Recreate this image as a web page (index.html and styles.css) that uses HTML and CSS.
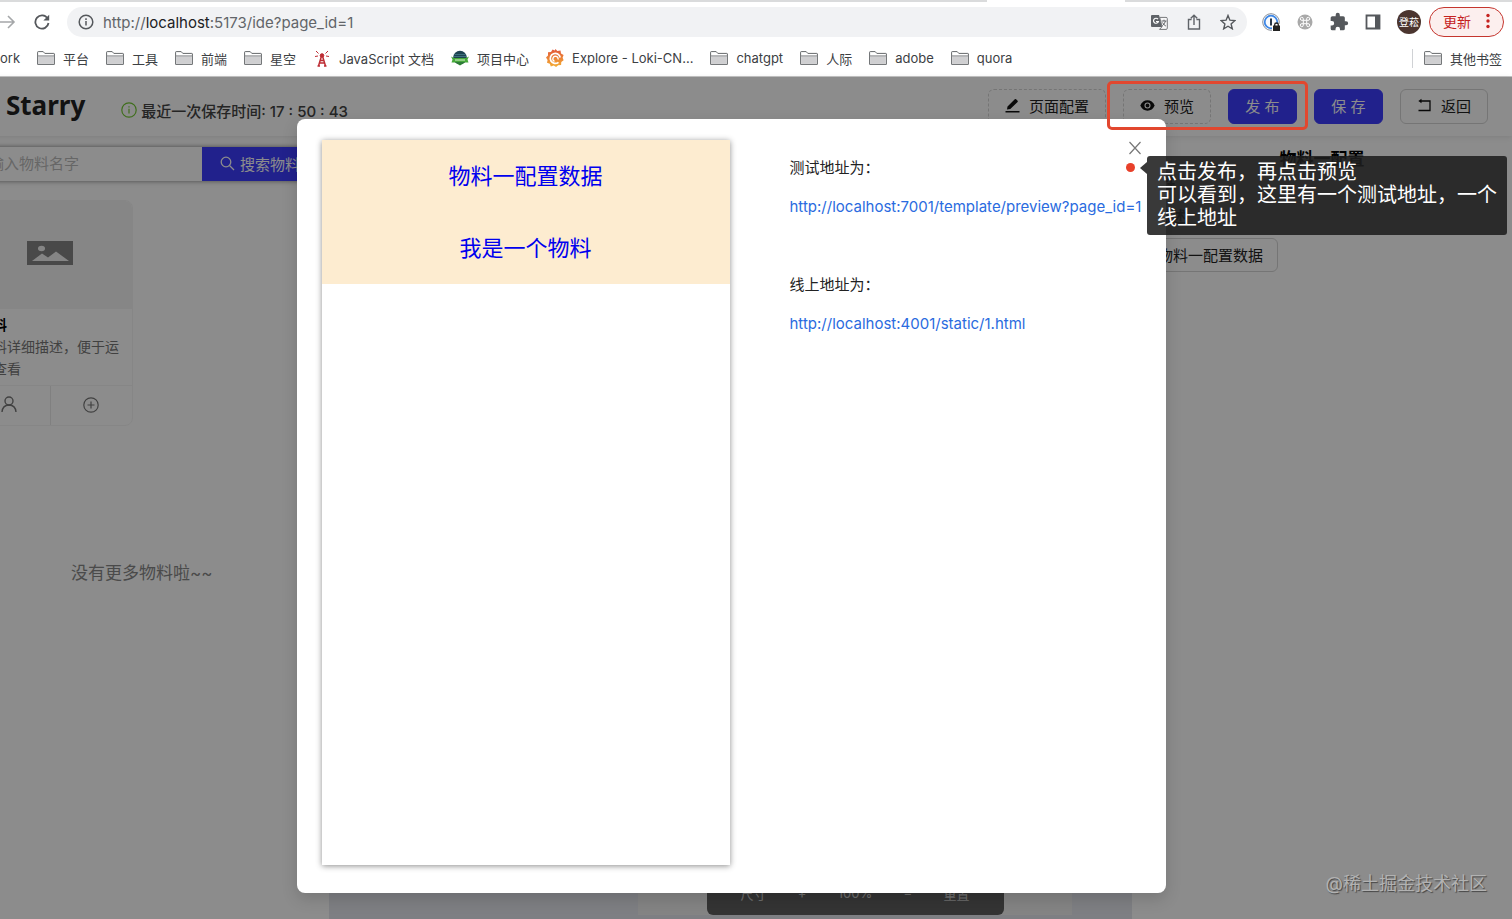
FILE: index.html
```
<!DOCTYPE html>
<html lang="zh-CN">
<head>
    <meta charset="UTF-8">
    <meta name="viewport" content="width=device-width, initial-scale=1.0">
    <link rel="stylesheet" href="styles.css">
    <title>Starry</title>
</head>
<body>
    <svg class="symbols" width="0" height="0" aria-hidden="true">
        <symbol id="folder" viewBox="0 0 18 14">
            <path d="M.6 13.4V1.2Q.6.6 1.2.6h5l1.6 1.8h9q.6 0 .6.6v10.4z" fill="#fff" stroke="#65686b"/>
            <path d="M1.1 5.2h15.8v7.7H1.1z" fill="#cfcfd1"/>
            <path d="M.6 4.9h16.8" stroke="#85878a"/>
        </symbol>
    </svg>

    <div class="browser">
        <div class="tab-strip"><div class="open-tab"></div></div>
        <div class="toolbar">
            <button class="icon-btn forward" aria-label="Forward">
                <svg width="16" height="16" viewBox="0 0 16 16" fill="none" stroke="#a5a7a9" stroke-width="1.6"><path d="M0 8h14M8 2l6 6-6 6"/></svg>
            </button>
            <button class="icon-btn reload" aria-label="Reload">
                <svg width="16" height="16" viewBox="0 0 16 16" fill="none" stroke="#55585c" stroke-width="1.8"><path d="M13.6 4.6A6.6 6.6 0 1 0 14.5 9"/><path d="M15.2.8v5.8H9.4z" fill="#55585c" stroke="none"/></svg>
            </button>
            <div class="omnibox">
                <svg width="16" height="16" viewBox="0 0 16 16" fill="none" stroke="#55585c" stroke-width="1.5"><circle cx="8" cy="8" r="6.8"/><path d="M8 7v4.6M8 4.2v1.7"/></svg>
                <div class="url">http://<span>localhost</span>:5173/ide?page_id=1</div>
                <button class="icon-btn" aria-label="Translate">
                    <svg width="17" height="16" viewBox="0 0 17 16"><path d="M1 1h7l3.5 12H1Q0 13 0 12V2Q0 1 1 1z" fill="#5f6368"/><path d="M8.7 3.4H15q1.3 0 1.3 1.2v9.6q0 1.2-1.3 1.2H8.5l2.6-2.7z" fill="#f7f7f8" stroke="#77797c"/><path d="M7 5.2A2.5 2.5 0 1 0 7.4 7.500H5" fill="none" stroke="#fff" stroke-width="1.2"/><path d="M10.500 7h5M13 5.700V7M14.500 7q-.8 3-3.200 4.700M11.500 8.500q1.200 2.400 3.400 3.600" fill="none" stroke="#66696c"/></svg>
                </button>
                <button class="icon-btn" aria-label="Share">
                    <svg width="14" height="16" viewBox="0 0 14 16" fill="none" stroke="#5f6368" stroke-width="1.4"><path d="M4.600 5.500H1.500V15h11V5.500H9.400M7 11V1.500M3.800 4.300 7 1.200l3.200 3.100"/></svg>
                </button>
                <button class="icon-btn" aria-label="Bookmark">
                    <svg width="16" height="16" viewBox="0 0 16 16" fill="none" stroke="#55585c" stroke-width="1.400"><path d="m8 1.500 1.900 4.700 5 .4-3.800 3.300 1.200 4.900L8 12.200l-4.300 2.600 1.200-4.900L1.100 6.600l5-.4z"/></svg>
                </button>
            </div>
            <div class="extensions">
                <button class="icon-btn" aria-label="Password manager">
                    <svg width="20" height="20" viewBox="0 0 20 20"><circle cx="10" cy="10" r="8.300" fill="#fff" stroke="#8a9099"/><circle cx="10" cy="10" r="6.300" fill="#f8fbff" stroke="#3d87e6" stroke-width="1.800"/><path d="M10 6.500v7" stroke="#26364a" stroke-width="2"/><path d="M11 12h8v7h-8z" fill="#fff"/><path d="M12 13.500h7V19h-7z" fill="#222"/><path d="M13.700 14v-1.200a1.800 1.800 0 0 1 3.600 0V14" fill="none" stroke="#222" stroke-width="1.300"/></svg>
                </button>
                <button class="icon-btn" aria-label="Shortcuts">
                    <svg width="20" height="20" viewBox="0 0 20 20"><circle cx="10" cy="10" r="7.500" fill="#a9a9a9"/><path d="M8.300 8.300h3.400v3.400H8.300zM8.300 8.300H7a1.500 1.500 0 1 1 1.300-1.500zM11.700 8.300H13a1.500 1.500 0 1 0-1.300-1.500zM8.300 11.700H7a1.500 1.500 0 1 0 1.300 1.500zM11.700 11.700H13a1.500 1.500 0 1 1-1.300 1.500z" fill="none" stroke="#fff"/></svg>
                </button>
                <button class="icon-btn" aria-label="Extensions">
                    <svg width="20" height="20" viewBox="0 0 24 24" fill="#55585c"><path d="M20.500 11H19V7a2 2 0 0 0-2-2h-4V3.500a2.500 2.500 0 0 0-5 0V5H4a2 2 0 0 0-2 2v3.800h1.500a2.700 2.700 0 0 1 0 5.400H2V20a2 2 0 0 0 2 2h3.800v-1.500a2.700 2.700 0 0 1 5.400 0V22H17a2 2 0 0 0 2-2v-4h1.500a2.500 2.500 0 0 0 0-5z"/></svg>
                </button>
                <button class="icon-btn" aria-label="Side panel">
                    <svg width="20" height="20" viewBox="0 0 20 20"><path d="M3.500 3.500h13v13h-13z" fill="#fff" stroke="#55585c" stroke-width="1.800"/><path d="M12 3h5v14h-5z" fill="#55585c"/></svg>
                </button>
                <div class="avatar">登菘</div>
            </div>
            <button class="update">更新
                <svg width="4" height="16" viewBox="0 0 4 16" fill="#c5221f"><circle cx="2" cy="2.500" r="1.700"/><circle cx="2" cy="8" r="1.700"/><circle cx="2" cy="13.500" r="1.700"/></svg>
            </button>
        </div>
        <nav class="bookmarks">
            <a href="#">ork</a>
            <a href="#"><svg class="folder"><use href="#folder"/></svg>平台</a>
            <a href="#"><svg class="folder"><use href="#folder"/></svg>工具</a>
            <a href="#"><svg class="folder"><use href="#folder"/></svg>前端</a>
            <a href="#"><svg class="folder"><use href="#folder"/></svg>星空</a>
            <a href="#">
                <svg width="18" height="18" viewBox="0 0 18 18" fill="none" stroke="#bd2c33"><circle cx="9" cy="6.500" r="1.800" fill="#bd2c33"/><path d="M8.200 8 5.500 17M9.800 8l2.700 9M7 11.500h4M6.500 14h5M4.500 17h2.500M11 17h2.500" stroke-width="1.500"/><path d="M5.500 4.500 3 2M12.500 4.500 15 2M5 7l-3 .5M13 7l3 .5"/></svg>JavaScript 文档</a>
            <a href="#">
                <svg width="18" height="18" viewBox="0 0 18 18"><circle cx="9" cy="8.500" r="6.800" fill="#1d4250"/><path d="M3.500 5.500h11M2.800 7.500h12.400" stroke="#3c6f7c"/><path d="M0 7.500l3 1.500h12l3-1.500-1.500 3 1 3h-17l1-3z" fill="#46a83a"/><path d="M4 11h10" stroke="#d8f0cd"/><path d="M4 13.500h10L9 16.500z" fill="#2d7e34"/></svg>项目中心</a>
            <a href="#">
                <svg width="18" height="18" viewBox="0 0 18 18"><defs><linearGradient id="loki" x2="0" y2="1"><stop stop-color="#e2573a"/><stop offset="1" stop-color="#f4ae33"/></linearGradient></defs><path d="m9.500 0 1.800 2 3.200-.5.5 3 2.600 1.500-1 2.800 1 2.500-2.300 1.700-.2 3-3 .2-2 1.800-2.400-1.400-2.900.8-1-2.700-2.800-1 .6-2.800L0 8.500l2-2L2 3.300l3-.3L6.600.6l2.100.8z" fill="url(#loki)"/><path d="M14.200 8.500a5 5 0 1 0-1.700 4.800" fill="none" stroke="#fff" stroke-width="1.700"/><path d="M12 10.500a2.600 2.600 0 1 0-3.500 1.800" fill="none" stroke="#fff" stroke-width="1.300"/></svg>Explore - Loki-CN...</a>
            <a href="#"><svg class="folder"><use href="#folder"/></svg>chatgpt</a>
            <a href="#"><svg class="folder"><use href="#folder"/></svg>人际</a>
            <a href="#"><svg class="folder"><use href="#folder"/></svg>adobe</a>
            <a href="#"><svg class="folder"><use href="#folder"/></svg>quora</a>
            <a href="#" class="other"><svg class="folder"><use href="#folder"/></svg>其他书签</a>
        </nav>
    </div>

    <div class="app">
        <header class="header">
            <div class="logo">Starry</div>
            <div class="save-time">
                <svg width="16" height="16" viewBox="0 0 16 16" fill="none" stroke="#73c934" stroke-width="1.200"><circle cx="8" cy="8" r="7.200"/><path d="M8 6.800v4.700M8 4.200v1.400"/></svg>
                最近一次保存时间: 17 : 50 : 43
            </div>
            <div class="actions">
                <button class="btn dashed">
                    <svg width="15" height="15" viewBox="0 0 15 15" fill="#111"><path d="M.5 13h14v1.400H.5zM2 11.500l.5-3L9.800 1.200q.7-.5 1.300 0l1.500 1.500q.5.600 0 1.300L5.300 11z"/></svg>页面配置</button>
                <button class="btn dashed">
                    <svg width="15" height="15" viewBox="0 0 15 15"><path d="M.3 7.500Q2.700 2.300 7.500 2.300t7.200 5.200q-2.400 5.200-7.200 5.200T.3 7.500z" fill="#111"/><circle cx="7.500" cy="7.500" r="2.500" fill="none" stroke="#fff" stroke-width="1.100"/></svg>预览</button>
                <button class="btn primary">发 布</button>
                <button class="btn primary">保 存</button>
                <button class="btn">
                    <svg width="15" height="15" viewBox="0 0 15 15" fill="none" stroke="#111" stroke-width="1.300"><path d="M3 3h10v9.500H1.500"/><path d="M4.500.8v4.400L1.300 3z" fill="#111" stroke="none"/></svg>返回</button>
            </div>
        </header>

        <main class="workspace">
            <aside class="materials">
                <div class="search">
                    <input type="text" placeholder="请输入物料名字" aria-label="物料名字">
                    <button class="search-btn">
                        <svg width="15" height="15" viewBox="0 0 15 15" fill="none" stroke="#fff" stroke-width="1.300"><circle cx="6" cy="6" r="4.800"/><path d="m9.500 9.500 4.500 4.500"/></svg>搜索物料</button>
                </div>
                <div class="card">
                    <div class="cover">
                        <svg width="46" height="24" viewBox="0 0 46 24"><path d="M0 0h46v24H0z" fill="#858585"/><ellipse cx="14.500" cy="7.500" rx="3.500" ry="2.700" fill="#f2f2f2"/><path d="M5 20l10-7.500 6 4L29 10.500 42 20z" fill="#f2f2f2"/></svg>
                    </div>
                    <div class="card-body">
                        <h4>物料</h4>
                        <p>物料详细描述，便于运营查看</p>
                    </div>
                    <div class="card-actions">
                        <button class="icon-btn" aria-label="用户"><svg width="18" height="18" viewBox="0 0 18 18" fill="none" stroke="#777" stroke-width="1.400"><circle cx="9" cy="5" r="4"/><path d="M2 16q.5-6.800 7-7 6.500.2 7 7"/></svg></button>
                        <button class="icon-btn" aria-label="添加"><svg width="16" height="16" viewBox="0 0 16 16" fill="none" stroke="#777" stroke-width="1.200"><circle cx="8" cy="8" r="7.200"/><path d="M8 4.500v7M4.500 8h7"/></svg></button>
                    </div>
                </div>
                <p class="no-more">没有更多物料啦~~</p>
            </aside>

            <section class="canvas">
                <div class="page">
                    <div class="zoom-bar">
                        <span>尺寸</span>
                        <button aria-label="放大">+</button>
                        <span>100%</span>
                        <button aria-label="缩小">−</button>
                        <button>重置</button>
                    </div>
                </div>
            </section>

            <aside class="config">
                <h3>物料一配置</h3>
                <p class="group">属性</p>
                <label for="desc">描述</label>
                <input id="desc" type="text" value="物料一配置数据">
            </aside>
        </main>

        <div class="mask">
            <div class="modal" role="dialog" aria-label="预览">
                <div class="phone">
                    <div class="material">物料一配置数据</div>
                    <div class="material">我是一个物料</div>
                </div>
                <div class="address">
                    <p>测试地址为：</p>
                    <a href="#">http://localhost:7001/template/preview?page_id=1</a>
                    <p class="online">线上地址为：</p>
                    <a href="#">http://localhost:4001/static/1.html</a>
                </div>
                <button class="close" aria-label="关闭">
                    <svg width="12" height="14" viewBox="0 0 12 14" stroke="#777" stroke-width="1.200"><path d="M.5 1 11.500 13M11.500 1 .5 13"/></svg>
                </button>
            </div>
        </div>
    </div>

    <div class="highlight"></div>
    <div class="dot"></div>
    <div class="note">点击发布，再点击预览<br>可以看到，这里有一个测试地址，一个线上地址</div>
    <div class="watermark">@稀土掘金技术社区</div>
</body>
</html>
```
FILE: styles.css
```
* {
    box-sizing: border-box;
}

body {
    margin: 0;
    height: 100vh;
    display: flex;
    flex-direction: column;
    position: relative;
    overflow: hidden;
    font-family: Inter, "Noto Sans CJK SC", sans-serif;
    font-size: 15px;
    color: #222;
}

button, input {
    font: inherit;
    color: inherit;
}

button {
    display: flex;
    align-items: center;
    justify-content: center;
    border: none;
    padding: 0;
    background: none;
    cursor: pointer;
    white-space: nowrap;
}

p, h3, h4 {
    margin: 0;
}

a {
    text-decoration: none;
}

svg {
    flex: none;
}

.symbols {
    position: absolute;
}

/* browser chrome */
.browser {
    flex: none;
    background: #fff;
    border-bottom: 1px solid #c4c4c4;
}

.tab-strip {
    height: 2px;
    background: #dadbdc;
    display: flex;
    justify-content: flex-end;
    padding-right: 387px;
}

.open-tab {
    width: 138px;
    background: #fff;
}

.toolbar {
    display: flex;
    align-items: center;
    height: 40px;
    padding-right: 8px;
}

.reload {
    margin: 0 17px 0 18px;
}

.omnibox {
    flex: 1;
    height: 30px;
    border-radius: 15px;
    background: #f1f2f4;
    display: flex;
    align-items: center;
    padding: 0 11px;
    gap: 19px;
}

.url {
    flex: 1;
    margin-left: -10px;
    color: #626569;
}

.url span {
    color: #202124;
}

.extensions {
    display: flex;
    align-items: center;
    gap: 15px;
    padding: 0 8px 0 14px;
}

.extensions .icon-btn {
    margin-right: -1px;
}

.avatar {
    width: 24px;
    height: 24px;
    border-radius: 50%;
    background: #4b352f;
    color: #fff;
    font-size: 10px;
    line-height: 24px;
    text-align: center;
}

.update {
    width: 75px;
    height: 30px;
    gap: 15px;
    padding-bottom: 2px;
    border: 1px solid #c5362f;
    border-radius: 15px;
    background: #fcefee;
    color: #c5221f;
    font-size: 14px;
}

.bookmarks {
    display: flex;
    align-items: center;
    gap: 17px;
    height: 34px;
    padding: 0 10px 2px 0;
    font-size: 13px;
}

.bookmarks a {
    display: flex;
    align-items: center;
    gap: 8px;
    color: #3c4043;
    white-space: nowrap;
}

.folder {
    width: 18px;
    height: 14px;
}

.bookmarks .other {
    margin-left: auto;
    padding-left: 11px;
    border-left: 1px solid #d0d2d5;
}

/* editor, scrolled 50px to the right */
.app {
    flex: 1;
    min-height: 0;
    margin-left: -50px;
    display: flex;
    flex-direction: column;
    position: relative;
    background: #fff;
}

.header {
    flex: none;
    height: 59px;
    display: flex;
    align-items: center;
    padding: 0 24px 0 56px;
    box-shadow: 0 1px 6px rgba(0, 0, 0, 0.1);
}

.logo {
    font-family: "Noto Sans", sans-serif;
    font-size: 26px;
    font-weight: 700;
    line-height: 32px;
    padding-bottom: 4px;
    color: #222;
}

.save-time {
    display: flex;
    align-items: center;
    gap: 4px;
    margin-left: 36px;
    padding-top: 7px;
    font-weight: 500;
    color: #444;
}

.actions {
    display: flex;
    gap: 17px;
    margin-left: auto;
}

.btn {
    height: 35px;
    padding: 0 16px 2px;
    gap: 9px;
    border: 1px solid #d5d5d5;
    border-radius: 6px;
}

.btn.dashed {
    border-style: dashed;
}

.btn.primary {
    width: 69px;
    background: #3d3dff;
    border-color: #3d3dff;
    color: #fff;
}

.workspace {
    flex: 1;
    min-height: 0;
    display: flex;
}

.materials {
    width: 379px;
    padding-top: 11px;
}

.search {
    display: flex;
    height: 34px;
    margin-right: 11px;
    box-shadow: 0 0 5px rgba(0, 0, 0, 0.5);
}

.search input {
    flex: 1;
    min-width: 0;
    border: none;
    padding: 0 24px 2px;
    background: #fff;
}

.search input::placeholder {
    color: #bbb;
}

.search-btn {
    width: 116px;
    gap: 5px;
    padding-bottom: 2px;
    background: #3d3dff;
    color: #fff;
}

.card {
    width: 166px;
    margin: 19px 0 0 17px;
    border: 1px solid #f5f5f5;
    border-radius: 8px;
    overflow: hidden;
}

.cover {
    height: 108px;
    display: flex;
    align-items: center;
    justify-content: center;
    padding-bottom: 4px;
    background: #f5f5f5;
}

.card-body {
    padding: 5px 11px;
    font-size: 14px;
    line-height: 22px;
    color: #777;
}

.card-body h4 {
    color: #000;
}

.card-actions {
    display: flex;
    height: 40px;
    border-top: 1px solid #f5f5f5;
}

.card-actions button {
    flex: 1;
    padding-bottom: 2px;
}

.card-actions button + button {
    border-left: 1px solid #e9e9e9;
}

.no-more {
    margin: 133px 0 0 121px;
    font-size: 17px;
    color: #888;
}

.canvas {
    flex: 1;
    display: flex;
    padding: 11px 60px 4px 309px;
    background: #e6e8ee;
}

.page {
    flex: 1;
    display: flex;
    align-items: flex-end;
    justify-content: center;
    background: #f0f0f1;
}

.zoom-bar {
    flex: none;
    width: 297px;
    height: 44px;
    display: flex;
    align-items: center;
    justify-content: space-between;
    padding: 0 34px;
    border-radius: 6px;
    background: #606060;
    color: #c8c8c8;
    font-size: 13px;
}

.config {
    width: 380px;
    padding: 11px 14px;
    line-height: 24px;
}

.config h3 {
    font-size: 17px;
    text-align: center;
    color: #000;
}

.config .group {
    font-weight: 700;
}

.config label {
    display: block;
    margin: 10px 0 9px 10px;
    font-weight: 700;
}

.config input {
    display: block;
    width: 132px;
    height: 34px;
    padding: 0 11px 2px;
    border: 1px solid #d5d5d5;
    border-radius: 6px;
    background: #fff;
}

/* preview dialog */
.mask {
    position: absolute;
    inset: 0;
    display: flex;
    justify-content: center;
    padding: 42px 0 26px;
    background: rgba(0, 0, 0, 0.45);
}

.modal {
    width: 869px;
    max-width: 100%;
    display: flex;
    position: relative;
    gap: 60px;
    padding: 21px 25px 28px;
    border-radius: 8px;
    background: #fff;
    box-shadow: 0 6px 16px rgba(0, 0, 0, 0.15);
}

.phone {
    flex: none;
    width: 408px;
    box-shadow: 0 1px 6px rgba(0, 0, 0, 0.45);
}

.material {
    background: #fdecd0;
    color: #0000ee;
    font-size: 22px;
    line-height: 72px;
    text-align: center;
}

.address {
    padding-top: 16px;
    line-height: 24px;
    white-space: nowrap;
}

.address a {
    display: block;
    margin-top: 15px;
    color: #2a6be0;
}

.address .online {
    margin-top: 54px;
}

.close {
    position: absolute;
    top: 22px;
    right: 25px;
}

/* walkthrough marks drawn over the editor */
.highlight {
    position: absolute;
    top: 81px;
    right: 204px;
    width: 201px;
    height: 49px;
    border: 3px solid #e2472f;
    border-radius: 5px;
}

.dot {
    position: absolute;
    top: 163px;
    right: 377px;
    width: 9px;
    height: 9px;
    border-radius: 50%;
    background: #e8402a;
}

.note {
    position: absolute;
    top: 156px;
    right: 5px;
    width: 360px;
    padding: 5px 10px;
    border-radius: 3px;
    background: rgba(30, 30, 30, 0.88);
    color: #fff;
    font-size: 20px;
    line-height: 23px;
}

.note::before {
    content: "";
    position: absolute;
    top: 6px;
    left: -7px;
    border: 6px solid transparent;
    border-left: none;
    border-right: 7px solid #383838;
}

.watermark {
    position: absolute;
    right: 25px;
    bottom: 24px;
    color: #b2b2b2;
    font-size: 18px;
    text-shadow: 1px 1px 1px #444;
}
```
